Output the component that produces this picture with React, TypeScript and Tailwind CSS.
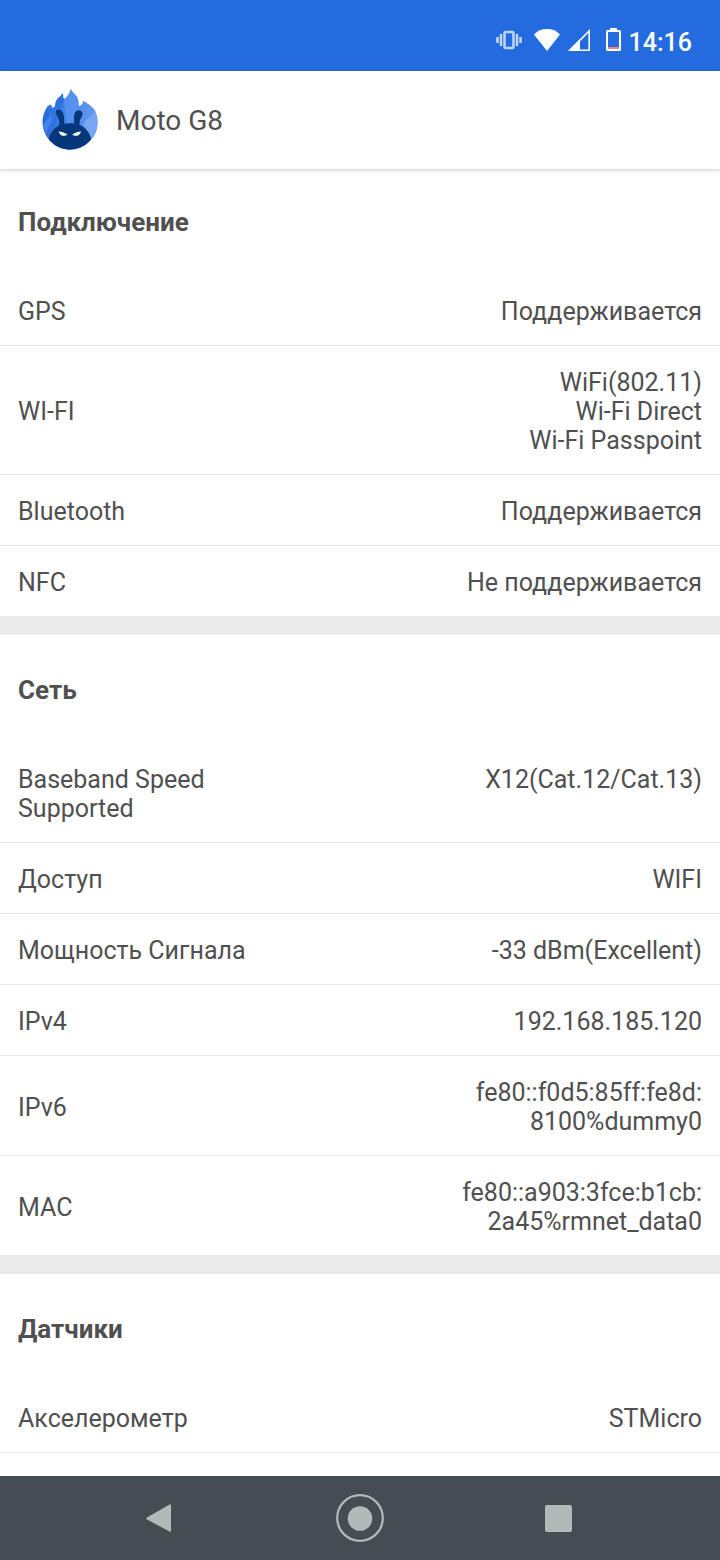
/**
 * Device details screen
 * Connectivity, network and sensor info listed in sections
 */

type InfoRow = {
  label: string;
  value: string[];
  alignTop?: boolean;
};

type InfoSection = {
  title: string;
  rows: InfoRow[];
  continues?: boolean;
};

const sections: InfoSection[] = [
  {
    title: 'Подключение',
    rows: [
      { label: 'GPS', value: ['Поддерживается'] },
      { label: 'WI-FI', value: ['WiFi(802.11)', 'Wi-Fi Direct', 'Wi-Fi Passpoint'] },
      { label: 'Bluetooth', value: ['Поддерживается'] },
      { label: 'NFC', value: ['Не поддерживается'] },
    ],
  },
  {
    title: 'Сеть',
    rows: [
      { label: 'Baseband Speed Supported', value: ['X12(Cat.12/Cat.13)'], alignTop: true },
      { label: 'Доступ', value: ['WIFI'] },
      { label: 'Мощность Сигнала', value: ['-33 dBm(Excellent)'] },
      { label: 'IPv4', value: ['192.168.185.120'] },
      { label: 'IPv6', value: ['fe80::f0d5:85ff:fe8d:', '8100%dummy0'] },
      { label: 'MAC', value: ['fe80::a903:3fce:b1cb:', '2a45%rmnet_data0'] },
    ],
  },
  {
    title: 'Датчики',
    rows: [{ label: 'Акселерометр', value: ['STMicro'] }],
    continues: true,
  },
];

function StatusBar() {
  return (
    <div className="flex h-[71px] items-center justify-end gap-2 bg-[#246bdf] pt-3.5 pr-7 text-white">
      <div className="flex items-center pb-1.5">
        {/* Vibrate */}
        <svg width="26" height="20" viewBox="0 0 26 20" className="mr-3" fill="none" stroke="#c3d8f8" aria-hidden="true">
          <rect x="8.500" y="2" width="9" height="16" rx="1" strokeWidth="2.500" />
          <path d="M5 4v12M21 4v12" strokeWidth="2.500" />
          <path d="M1.500 7v6M24.500 7v6" strokeWidth="2.500" />
        </svg>
        {/* Wi-Fi */}
        <svg width="26" height="22" viewBox="0 0 26 22" className="mr-2" fill="#fff" aria-hidden="true">
          <path d="M0 5.500C3.500 1.800 8 0 13 0s9.500 1.800 13 5.500L13 22z" />
        </svg>
        {/* Mobile signal */}
        <svg width="22" height="22" viewBox="0 0 22 22" className="mr-4" aria-hidden="true">
          <path d="M2 21.200L21.200 2v19.200z" fill="none" stroke="#fff" strokeWidth="1.600" />
          <path d="M0 22L12 10v12z" fill="#fff" />
        </svg>
        {/* Battery */}
        <svg width="15" height="23" viewBox="0 0 15 23" aria-hidden="true">
          <path d="M4 0h7v3H4z" fill="#fff" />
          <rect x="1" y="3" width="13" height="19" rx="0.500" fill="none" stroke="#fff" strokeWidth="2" />
          <path d="M2 19h11v2H2z" fill="#ef8279" />
        </svg>
      </div>
      <span className="text-[25px] leading-7 font-medium">14:16</span>
    </div>
  );
}

function Logo() {
  return (
    <svg width="56" height="61" viewBox="37 28 168 184" aria-hidden="true">
      <defs>
        <linearGradient id="flame" x1="0" y1="0" x2="1" y2="0">
          <stop offset="0" stopColor="#2468d8" />
          <stop offset="0.500" stopColor="#4788ec" />
          <stop offset="1" stopColor="#669af0" />
        </linearGradient>
        <clipPath id="round">
          <circle cx="121" cy="128" r="83" />
        </clipPath>
      </defs>
      <path
        d="M54 79l10-4 3 10 9-5c-1-12 4-22 16-31l6-8 1 14 5 4c9-7 16-17 19-31 4 10 18 18 22 31 2 7 2 14 2 20 10-1 14-8 13-16 14 9 26 16 36 29A83 83 0 1 1 54 79z"
        fill="url(#flame)"
      />
      <path d="M78 80c-1-12 4-22 16-31l6-8 1 14 5 4c-11 14-15 30-10 47-11 10-24 28-28 48-3-24 16-38 10-74z" fill="#2e70df" />
      <path d="M104 59c9-7 16-17 19-31 4 10 18 18 22 31 3 15-3 26 6 48l-43 32c8-26-6-45-4-80z" fill="#5591ee" />
      <path d="M196 93c-9 22-33 27-35 46l28 38c17-22 20-52 7-84z" fill="#77a6f3" />
      <path d="M39 139c7-16 22-22 24-39 9 19 0 33-8 46l-6 22z" fill="#4483e7" />
      <g fill="#07377b" clipPath="url(#round)">
        <path d="M57 180c5-29 27-49 64-49s58 20 64 49c-16 22-38 32-64 32s-48-10-64-32z" />
        <path d="M88 142c3-17 0-25-8-36-6-12 4-19 14-13 11 9 9 26 10 48z" />
        <path d="M134 140c0-17-3-30 2-41 5-10 21-8 23 2 1 9-8 16-9 26v16z" />
      </g>
      <path d="M86 156c9 0 18 3 27 9-8 7-20 5-23-3zM155 156c-9 0-18 3-27 9 8 7 20 5 23-3z" fill="#fff" />
    </svg>
  );
}

function Row({ row, bordered }: { row: InfoRow; bordered: boolean }) {
  return (
    <div
      className={`flex justify-between px-[18px] pt-[22px] pb-[19px] ${row.alignTop ? 'items-start' : 'items-center'} ${
        bordered ? 'border-b border-[#e8e8e8]' : ''
      }`}
    >
      <dt className="max-w-[240px]">{row.label}</dt>
      <dd className="text-right">
        {row.value.map((line) => (
          <div key={line}>{line}</div>
        ))}
      </dd>
    </div>
  );
}

function Section({ section }: { section: InfoSection }) {
  return (
    <section className="border-b-[19px] border-[#eaeaea] last:border-b-0">
      <h2 className="px-[18px] pt-[41px] pb-[38px] text-[26px] leading-[29px] font-bold">{section.title}</h2>
      <dl>
        {section.rows.map((row, i) => (
          <Row key={row.label} row={row} bordered={section.continues || i < section.rows.length - 1} />
        ))}
      </dl>
    </section>
  );
}

function NavBar() {
  return (
    <nav className="flex h-[84px] shrink-0 items-center justify-center gap-[152px] bg-[#454c52]">
      <button type="button" aria-label="Назад">
        <svg width="48" height="48" viewBox="0 0 48 48" fill="#b1b9b9">
          <path d="M33.500 10.500Q35 9.700 35 11.500v25q0 1.800-1.500 1L11 25.500q-1.500-1 0-2z" />
        </svg>
      </button>
      <button type="button" aria-label="Домой">
        <svg width="48" height="48" viewBox="0 0 48 48">
          <circle cx="24" cy="24" r="22.800" fill="none" stroke="#b1b9b9" strokeWidth="2.200" />
          <circle cx="24" cy="24.500" r="12.300" fill="#b1b9b9" />
        </svg>
      </button>
      <button type="button" aria-label="Недавние">
        <svg width="48" height="48" viewBox="0 0 48 48">
          <rect x="9" y="11" width="27" height="27" rx="2" fill="#b1b9b9" />
        </svg>
      </button>
    </nav>
  );
}

export default function App() {
  return (
    <div className="flex min-h-screen flex-col bg-white font-[Roboto,'Noto_Sans',sans-serif] text-[25px] leading-[29px] text-[#505050]">
      <StatusBar />
      <header className="z-10 flex h-[98px] items-center gap-[18px] bg-white pb-0.5 pl-[42px] shadow-[0_1px_4px_rgba(0,0,0,0.2)]">
        <Logo />
        <h1 className="pt-1 text-[28px] leading-8">Moto G8</h1>
      </header>
      {/* List slides slightly under the header shadow */}
      <main className="-mt-0.5 flex-1">
        {sections.map((section) => (
          <Section key={section.title} section={section} />
        ))}
      </main>
      <NavBar />
    </div>
  );
}
